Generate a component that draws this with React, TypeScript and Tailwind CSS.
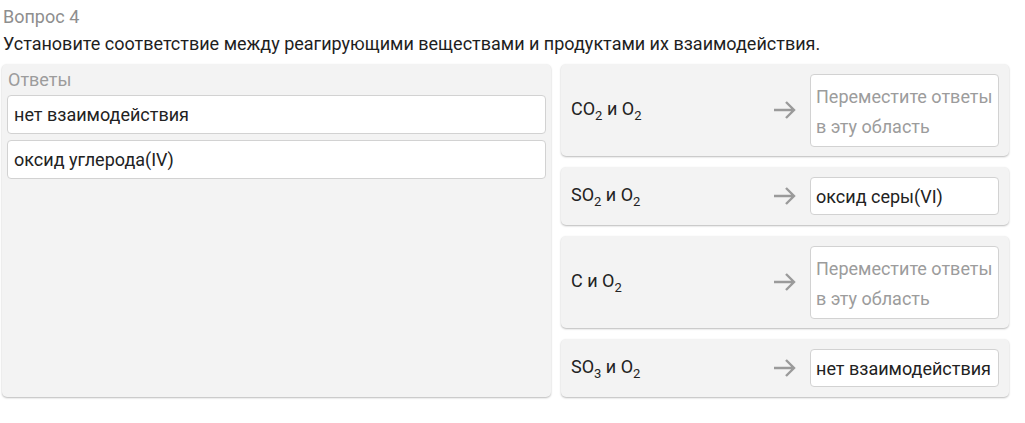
import React from "react";

const font = { fontFamily: "Roboto, 'Noto Sans', sans-serif" };

function Arrow() {
  return (
    <svg width="26" height="26" viewBox="0 0 26 26" className="shrink-0">
      <path d="M2 13h20M14 5l8 8-8 8" fill="none" stroke="#9a9a9a" strokeWidth="2.4" strokeLinecap="butt" strokeLinejoin="miter" />
    </svg>
  );
}

function Sub({ children }: { children: React.ReactNode }) {
  return <span className="relative top-[5px] text-[13px] leading-none">{children}</span>;
}

function Chem({ a, an, b, bn }: { a: string; an?: string; b: string; bn: string }) {
  return (
    <span className="text-[18px] leading-[22px] text-[#222]">
      {a}
      {an ? <Sub>{an}</Sub> : null} и {b}
      <Sub>{bn}</Sub>
    </span>
  );
}

function Row({ label, answer, h }: { label: React.ReactNode; answer?: string; h: string }) {
  return (
    <div className={`flex items-center rounded-[5px] bg-[#f3f3f3] pl-[10px] pr-[10px] shadow-[0_1px_2px_rgba(0,0,0,0.28)] ${h}`}>
      <div className="flex-1 pb-[1px]">{label}</div>
      <div className="mr-[12px]">
        <Arrow />
      </div>
      {answer ? (
        <div className="flex h-[38px] w-[189px] items-center whitespace-nowrap rounded-[4px] border border-[#d2d2d2] bg-white px-[5px] text-[18px] text-[#222]">
          {answer}
        </div>
      ) : (
        <div className="flex h-[73px] w-[189px] flex-col justify-center whitespace-nowrap rounded-[4px] border border-[#d2d2d2] bg-white px-[5px] pt-[3px] text-[18px] leading-[30px] text-[#9c9c9c]">
          <span>Переместите ответы</span>
          <span>в эту область</span>
        </div>
      )}
    </div>
  );
}

export default function App() {
  return (
    <div style={font} className="w-[1025px] h-[423px] bg-white px-[2px] pt-[6px]">
      <div className="pl-[1px] text-[18px] leading-[22px] text-[#8e8e8e]">Вопрос 4</div>
      <div className="pl-[1px] text-[18px] leading-[22px] text-[#1e1e1e] mt-[5px]">
        Установите соответствие между реагирующими веществами и продуктами их взаимодействия.
      </div>
      <div className="mt-[9px] flex gap-[10px]">
        <div className="w-[549px] h-[333px] rounded-[5px] bg-[#f3f3f3] px-[5px] pt-[5px] shadow-[0_1px_2px_rgba(0,0,0,0.28)]">
          <div className="pl-[1px] text-[18px] leading-[22px] text-[#9c9c9c]">Ответы</div>
          <div className="mt-[4px] flex flex-col gap-[6px]">
            <div className="flex h-[39px] items-center rounded-[4px] border border-[#d2d2d2] bg-white px-[6px] text-[18px] text-[#222]">
              нет взаимодействия
            </div>
            <div className="flex h-[39px] items-center rounded-[4px] border border-[#d2d2d2] bg-white px-[6px] text-[18px] text-[#222]">
              оксид углерода(IV)
            </div>
          </div>
        </div>
        <div className="flex w-[448px] flex-col gap-[11px]">
          <Row h="h-[92px]" label={<Chem a="CO" an="2" b="O" bn="2" />} />
          <Row h="h-[58px]" label={<Chem a="SO" an="2" b="O" bn="2" />} answer="оксид серы(VI)" />
          <Row h="h-[92px]" label={<Chem a="C" b="O" bn="2" />} />
          <Row h="h-[58px]" label={<Chem a="SO" an="3" b="O" bn="2" />} answer="нет взаимодействия" />
        </div>
      </div>
    </div>
  );
}
